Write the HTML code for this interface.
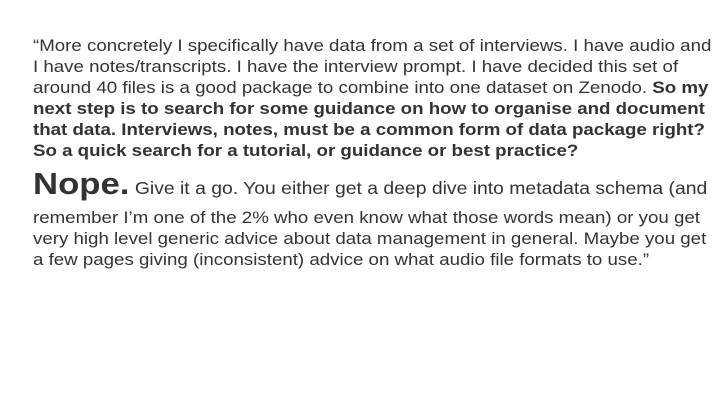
<!DOCTYPE html>
<html><head><style>
body{margin:0;width:720px;height:405px;background:#fff;overflow:hidden;font-family:"Liberation Sans",Arial,sans-serif;color:#333;}
.l{position:absolute;left:33px;font-size:16.7px;line-height:21px;white-space:nowrap;transform:scaleX(1.12);transform-origin:0 0;}
b{font-weight:bold;}
</style></head><body>
<div class="l" style="top:35px">“More concretely I specifically have data from a set of interviews. I have audio and</div>
<div class="l" style="top:56px">I have notes/transcripts. I have the interview prompt. I have decided this set of</div>
<div class="l" style="top:77px">around 40 files is a good package to combine into one dataset on Zenodo. <b>So my</b></div>
<div class="l" style="top:98px"><b>next step is to search for some guidance on how to organise and document</b></div>
<div class="l" style="top:119px"><b>that data. Interviews, notes, must be a common form of data package right?</b></div>
<div class="l" style="top:140px"><b>So a quick search for a tutorial, or guidance or best practice?</b></div>
<div class="l" style="top:166px;line-height:36px;font-size:17.3px"><b style="font-size:31px">Nope.</b> Give it a go. You either get a deep dive into metadata schema (and</div>
<div class="l" style="top:207px">remember I’m one of the 2% who even know what those words mean) or you get</div>
<div class="l" style="top:228px">very high level generic advice about data management in general. Maybe you get</div>
<div class="l" style="top:249px">a few pages giving (inconsistent) advice on what audio file formats to use.”</div>
</body></html>
